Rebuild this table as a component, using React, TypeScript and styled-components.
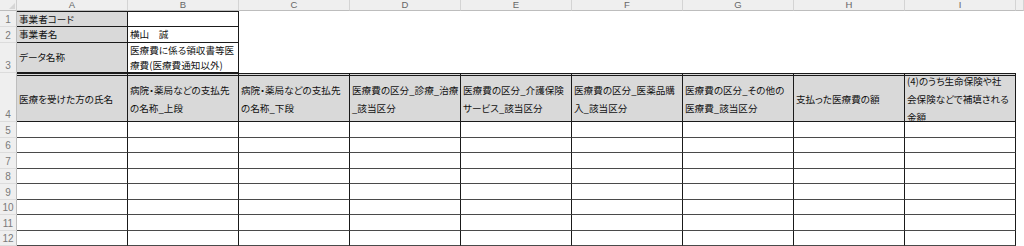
import { Fragment } from "react";
import styled, { createGlobalStyle } from "styled-components";

const GlobalStyle = createGlobalStyle`
  html, body {
    margin: 0;
    padding: 0;
    background: #ffffff;
    overflow: hidden;
  }
`;

const JP = `"Noto Sans CJK JP", "Noto Sans", sans-serif`;

const COLUMNS = ["A", "B", "C", "D", "E", "F", "G", "H", "I"];
const ROW_HEIGHTS = [11, 16, 16, 30, 49, 16, 15, 16, 15, 16, 15, 16, 15];

const Sheet = styled.div`
  display: grid;
  grid-template-columns: 17px repeat(9, 111px) 1fr;
  grid-template-rows: ${ROW_HEIGHTS.map((h) => `${h}px`).join(" ")};
  width: 1024px;
  height: 246px;
  overflow: hidden;
  font-family: ${JP};
  color: #111;
`;

const Corner = styled.div`
  position: relative;
  background: #efefef;
  border-right: 1px solid #cfcfcf;
  border-bottom: 1px solid #bdbdbd;
  box-sizing: border-box;

  &::after {
    content: "";
    position: absolute;
    right: 1px;
    bottom: 1px;
    border-style: solid;
    border-width: 0 0 6px 6px;
    border-color: transparent transparent #d6d6d6 transparent;
  }
`;

const ColHead = styled.div`
  background: #efefef;
  border-right: 1px solid #d4d4d4;
  border-bottom: 1px solid #bdbdbd;
  box-sizing: border-box;
  display: flex;
  align-items: center;
  justify-content: center;
  font-family: "Liberation Sans", Arial, sans-serif;
  font-size: 9.5px;
  line-height: 1;
  color: #666;
`;

const RowHead = styled.div`
  background: #efefef;
  border-right: 1px solid #bdbdbd;
  border-bottom: 1px solid #dcdcdc;
  box-sizing: border-box;
  display: flex;
  align-items: flex-end;
  justify-content: center;
  font-family: "Liberation Sans", Arial, sans-serif;
  font-size: 10px;
  line-height: 12px;
  color: #7a7a7a;
`;

type Tone = "label" | "value" | "blank" | "head" | "data";

const Cell = styled.div<{ $tone: Tone; $top?: boolean; $lh?: number }>`
  box-sizing: border-box;
  display: flex;
  flex-direction: column;
  justify-content: center;
  padding: 0 2px;
  font-size: 9.6px;
  font-feature-settings: "palt";
  line-height: ${({ $lh }) => $lh ?? 14}px;
  white-space: nowrap;
  overflow: visible;
  background: ${({ $tone }) =>
    $tone === "label" || $tone === "head" ? "#d9d9d9" : "#ffffff"};
  border-top: ${({ $tone, $top }) =>
    $tone === "head"
      ? "3px double #1a1a1a"
      : $top
        ? "1px solid #1a1a1a"
        : "none"};
  border-right: ${({ $tone }) =>
    $tone === "blank" ? "none" : "1px solid #1a1a1a"};
  border-bottom: ${({ $tone }) =>
    $tone === "blank"
      ? "none"
      : $tone === "data"
        ? "1px solid #4a4a4a"
        : "1px solid #1a1a1a"};
`;

const Line = styled.span`
  display: block;
`;

const HEADERS: string[][] = [
  ["医療を受けた方の氏名"],
  ["病院・薬局などの支払先", "の名称_上段"],
  ["病院・薬局などの支払先", "の名称_下段"],
  ["医療費の区分_診療_治療", "_該当区分"],
  ["医療費の区分_介護保険", "サービス_該当区分"],
  ["医療費の区分_医薬品購", "入_該当区分"],
  ["医療費の区分_その他の", "医療費_該当区分"],
  ["支払った医療費の額"],
  ["(4)のうち生命保険や社", "会保険などで補填される", "金額"],
];

const INFO: { label: string; value: string[] }[] = [
  { label: "事業者コード", value: [] },
  { label: "事業者名", value: ["横山　誠"] },
  { label: "データ名称", value: ["医療費に係る領収書等医", "療費(医療費通知以外)"] },
];

function Text({ lines }: { lines: string[] }) {
  return (
    <>
      {lines.map((l, i) => (
        <Line key={i}>{l}</Line>
      ))}
    </>
  );
}

export default function App() {
  return (
    <>
      <GlobalStyle />
      <Sheet>
        <Corner />
        {COLUMNS.map((c) => (
          <ColHead key={c}>{c}</ColHead>
        ))}
        <ColHead />

        {INFO.map((row, r) => (
          <Fragment key={`info${r}`}>
            <RowHead>{r + 1}</RowHead>
            <Cell $tone="label" $top={r === 0} $lh={15}>
              {row.label}
            </Cell>
            <Cell $tone="value" $top={r === 0} $lh={15}>
              <Text lines={row.value} />
            </Cell>
            {COLUMNS.slice(2).map((c) => (
              <Cell key={c} $tone="blank" />
            ))}
            <Cell $tone="blank" />
          </Fragment>
        ))}

        <RowHead>4</RowHead>
        {HEADERS.map((lines, i) => (
          <Cell key={`head${i}`} $tone="head" $lh={18}>
            <Text lines={lines} />
          </Cell>
        ))}
        <Cell $tone="blank" />

        {Array.from({ length: 8 }, (_, r) => (
          <Fragment key={`data${r}`}>
            <RowHead>{r + 5}</RowHead>
            {COLUMNS.map((c) => (
              <Cell key={c} $tone="data" />
            ))}
            <Cell $tone="blank" />
          </Fragment>
        ))}
      </Sheet>
    </>
  );
}
